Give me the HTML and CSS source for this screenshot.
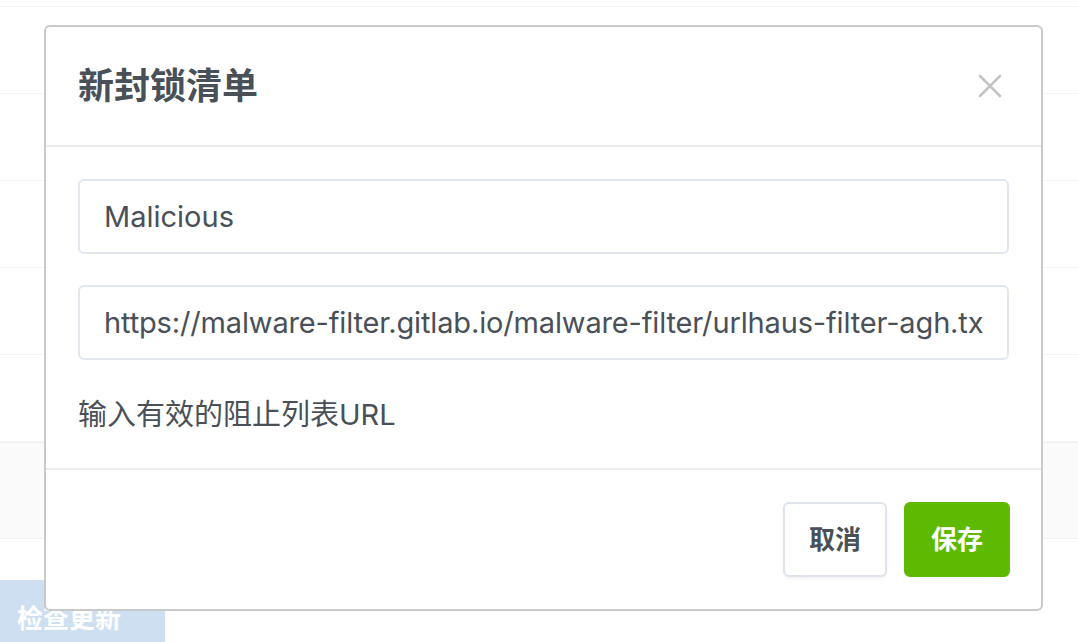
FILE: index.html
```html
<!DOCTYPE html>
<html lang="zh-CN">
<head>
<meta charset="utf-8">
<title>新封锁清单</title>
<link rel="stylesheet" href="styles.css">
</head>
<body>
<div class="page">
  <div class="row row-first"></div>
  <div class="row"></div>
  <div class="row"></div>
  <div class="row"></div>
  <div class="row"></div>
  <div class="row"></div>
  <div class="row row-gray"></div>
  <div class="actions">
    <button class="btn-check">检查更新</button>
  </div>
</div>

<div class="modal">
  <div class="modal-header">
    <h2 class="modal-title">新封锁清单</h2>
    <button class="close" aria-label="close">
      <svg width="24" height="24" viewBox="0 0 24 24"><path d="M2 2 L22 22 M22 2 L2 22" stroke="#c4c4c4" stroke-width="2.6" stroke-linecap="round" fill="none"/></svg>
    </button>
  </div>
  <div class="modal-body">
    <input class="form-control" type="text" value="Malicious">
    <input class="form-control second" type="text" value="https://malware-filter.gitlab.io/malware-filter/urlhaus-filter-agh.txt">
    <div class="help">输入有效的阻止列表URL</div>
  </div>
  <div class="modal-footer">
    <button class="btn btn-cancel">取消</button>
    <button class="btn btn-save">保存</button>
  </div>
</div>
</body>
</html>
```

FILE: styles.css
```css
html, body {
  margin: 0;
  padding: 0;
}
body {
  width: 1078px;
  height: 642px;
  overflow: hidden;
  position: relative;
  background: #ffffff;
  font-family: Inter, "Noto Sans CJK SC", sans-serif;
  color: #495057;
}

/* background page */
.page {
  display: flex;
  flex-direction: column;
}
.row {
  height: 86px;
  border-bottom: 1px solid #f3f4f5;
}
.row-first {
  height: 6px;
}
.row-gray {
  height: 95px;
  background: #fafafa;
  border-top: 1px solid #f0f0f0;
  border-bottom: 1px solid #f0f0f0;
}
.actions {
  margin-top: 41px;
  display: flex;
}
.btn-check {
  width: 165px;
  height: 76px;
  border: none;
  margin: 0;
  padding: 0 0 0 17px;
  text-align: left;
  background: #cfdff2;
  color: #ffffff;
  font-family: Inter, "Noto Sans CJK SC", sans-serif;
  font-size: 26px;
  font-weight: 700;
  line-height: 78px;
}

/* modal */
.modal {
  position: absolute;
  left: 44px;
  top: 25px;
  width: 995px;
  border: 2px solid #c9c9c9;
  border-radius: 6px;
  background: #ffffff;
  display: flex;
  flex-direction: column;
}
.modal-header {
  height: 118px;
  padding: 0 39px 0 32px;
  display: flex;
  align-items: center;
  justify-content: space-between;
  border-bottom: 2px solid #e9ebf0;
}
.modal-title {
  margin: 0;
  font-size: 36px;
  font-weight: 600;
  line-height: 44px;
  color: #495057;
}
.close {
  border: none;
  background: none;
  padding: 0;
  margin: 0;
  width: 24px;
  height: 24px;
  display: flex;
}
.modal-body {
  padding: 32px 32px 32px 32px;
  display: flex;
  flex-direction: column;
}
.form-control {
  box-sizing: border-box;
  width: 100%;
  height: 75px;
  margin: 0;
  padding: 0 24px;
  border: 2px solid #e2e6ee;
  border-radius: 6px;
  background: #ffffff;
  font-family: Inter, "Noto Sans CJK SC", sans-serif;
  font-size: 29px;
  color: #495057;
  outline: none;
}
.form-control.second {
  margin-top: 31px;
  letter-spacing: -0.15px;
}
.help {
  margin-top: 34px;
  line-height: 42px;
  font-size: 29px;
  color: #495057;
}
.modal-footer {
  border-top: 2px solid #e9ebf0;
  padding: 32px 31px 32px 32px;
  display: flex;
  justify-content: flex-end;
  gap: 17px;
}
.btn {
  box-sizing: border-box;
  height: 75px;
  margin: 0;
  border-radius: 6px;
  font-family: Inter, "Noto Sans CJK SC", sans-serif;
  font-size: 26px;
  font-weight: 600;
  line-height: 1;
}
.btn-cancel {
  width: 104px;
  background: #ffffff;
  border: 2px solid #dfe3ec;
  color: #495057;
  box-shadow: 0 2px 3px rgba(0, 0, 0, 0.05);
}
.btn-save {
  width: 106px;
  background: #5eba00;
  border: 2px solid #5eba00;
  color: #ffffff;
}
```
